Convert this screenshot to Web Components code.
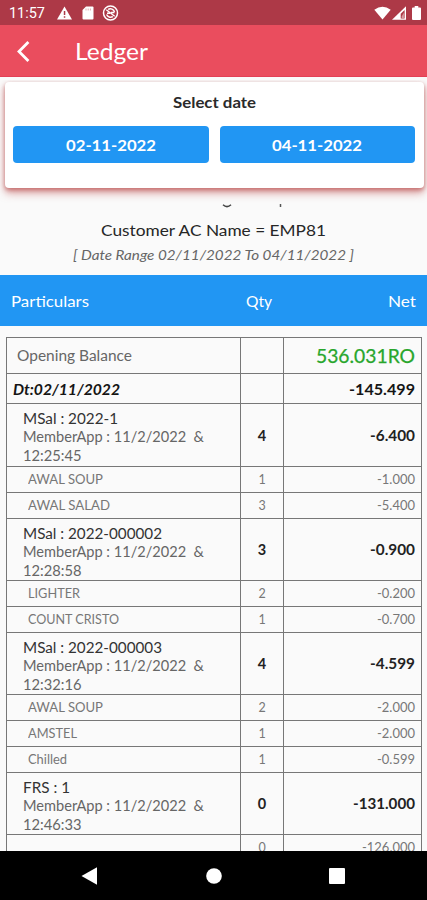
<!DOCTYPE html>
<html lang="en"><head><meta charset="utf-8"><title>Ledger</title>
<style>html,body{margin:0;height:100%;overflow:hidden;background:#fafafa}body{font-family:Lato,"Noto Sans",sans-serif}</style></head>
<body><ledger-app></ledger-app>
<script>
const define=(name,html,init)=>customElements.define(name,class extends HTMLElement{
  connectedCallback(){
    if(this.shadowRoot)return;
    const t=document.createElement('template');
    t.innerHTML=typeof html==='function'?html(this):html;
    this.attachShadow({mode:'open'}).append(t.content.cloneNode(true));
    if(init)init(this);
  }
});

// A single line of text widened to the width given in "w".
define('text-line',`<style>:host{display:inline-block;white-space:pre;flex:none;text-align:left}span{display:inline-block;transform-origin:0 50%}</style><span></span>`,el=>{
  const s=el.shadowRoot.querySelector('span');s.textContent=el.getAttribute('text');
  const w=+el.getAttribute('w');
  if(w){const k=w/s.getBoundingClientRect().width;s.style.transform=`scaleX(${k})`;el.style.width=w+'px';}
});

define('status-bar',`<style>
:host{display:flex;height:25px;background:#ad3947;color:#fff;align-items:center;box-sizing:border-box;padding:1px 6px 0 9px;font:400 14.500px/24px Roboto,sans-serif}
text-line{position:relative;top:1px}
svg{display:block;fill:#fff;flex:none}.sp{flex:1}</style>
<text-line text="11:57" w="36"></text-line>
<svg style="margin-left:12px" width="15" height="14" viewBox="0 0 15 14"><path d="M7.5 .5 15 13.5H0z"/><path d="M6.8 5h1.5v4H6.8zM6.8 10.3h1.5v1.5H6.8z" fill="#ad3947"/></svg>
<svg style="margin-left:10px" width="12" height="14" viewBox="0 0 12 14"><path d="M4 .5h6.5q1 0 1 1v11q0 1-1 1h-9q-1 0-1-1V4z"/><path d="M4 2.5v2M6.2 2.5v2M8.4 2.5v2" stroke="#d99ca3" stroke-width=".8"/></svg>
<svg style="margin-left:8px" width="17" height="16" viewBox="0 0 17 16"><g fill="none" stroke="#fff"><circle cx="8.5" cy="8" r="7" stroke-width="1.5"/><path d="M4.600 9.500A4.200 4.200 0 0 0 10.800 11.500M12.500 7A4.200 4.200 0 0 0 6.200 4.500" stroke-width="1.500"/><path d="M4.300 4.800 12.700 11.200M5 8.300h3M9 7.500h3.500" stroke-width="1.400"/></g></svg>
<span class="sp"></span>
<svg width="17" height="14" viewBox="0 0 17 14"><path d="M.3 3.8Q8.5-2.4 16.7 3.8L8.5 13.6z"/></svg>
<svg style="margin-left:1px" width="14" height="14" viewBox="0 0 14 14"><path d="M0 13.8 14 .3v13.5z"/><path d="M8.7 7.7 12.6 4v8.4H8.7z" fill="#ad3947"/><path d="m9.7 10.5 2.2-4v5.8H9.7z" fill="#d99ca3"/></svg>
<svg style="margin-left:6px" width="9" height="14" viewBox="0 0 9 14"><path d="M2.7 0h3.6v1.5H8q1 0 1 1V13q0 1-1 1H1q-1 0-1-1V2.500q0-1 1-1h1.700z"/></svg>`);

define('app-bar',`<style>:host{display:flex;height:52px;background:#ea4d5e;border-bottom:1px solid #e24056;box-sizing:border-box;align-items:center;padding-left:16px;color:#fff;font-size:24px;line-height:50px}
svg{margin-right:44px}</style>
<svg width="15" height="24" viewBox="0 0 15 24"><path d="M12.400 3 3 12.500 12.400 22" fill="none" stroke="#fff" stroke-width="2.800"/></svg><text-line text="Ledger" w="73"></text-line>`);

define('date-button',el=>`<style>:host{display:flex;flex:1;height:37px;background:#2196f3;border-radius:4px;align-items:center;justify-content:center;color:#fff;font-weight:700;font-size:15.500px}</style><text-line text="${el.getAttribute('value')}" w="90"></text-line>`);

define('date-card',`<style>:host{display:block;margin:5px 3px 0 5px;height:106px;background:#fff;border-radius:4px;box-sizing:border-box;padding:10px 9px 0 8px;box-shadow:0 5px 9px rgba(190,70,70,.5),0 2px 4px rgba(170,60,60,.55);clip-path:inset(-2px -8px -18px -8px)}
h2{margin:0;font-size:15.500px;font-weight:700;color:#2a2a2a;text-align:center;line-height:20px}
.row{display:flex;gap:11px;margin-top:14px}</style>
<h2><text-line text="Select date" w="83"></text-line></h2><div class="row"><date-button value="02-11-2022"></date-button><date-button value="04-11-2022"></date-button></div>`);

define('report-title',`<style>:host{display:flex;flex-direction:column;align-items:center;height:87px}
svg{display:block;flex:none;margin-top:16px}.n{font-size:16px;line-height:20px;margin-top:11px;color:#262626}.d{font-size:14px;line-height:20px;font-style:italic;color:#666;margin-top:5px}</style>
<svg width="427" height="5" viewBox="0 0 427 5"><path d="M223 .8Q227 4.500 231 .8" fill="none" stroke="#444" stroke-width="1.500"/><path d="M280.500 0v3" stroke="#555" stroke-width="1.500"/></svg>
<text-line class="n" text="Customer AC Name = EMP81" w="225"></text-line><text-line class="d" text="[ Date Range 02/11/2022 To 04/11/2022 ]" w="281"></text-line>`);

define('column-head',`<style>:host{display:grid;grid-template-columns:1fr 58px 128px;height:51px;padding:0 11px 0 11px;box-sizing:border-box;background:#2196f3;color:#fff;font-size:16px;align-items:center;line-height:51px}.q{justify-self:center}.r{justify-self:end}</style>
<text-line text="Particulars" w="78"></text-line><text-line class="q" text="Qty" w="26"></text-line><text-line class="r" text="Net" w="28"></text-line>`);

define('ledger-row',`<style>
:host{display:grid;grid-template-columns:233px 42px 1fr;column-gap:1px;background:#777;border-bottom:1px solid #777;box-sizing:border-box}
div{background:#fafafa;display:flex;align-items:center;min-width:0}
.q{justify-content:center}.r{justify-content:flex-end;padding-right:6px}
:host([kind=open]){height:36px;font-size:14.500px;color:#666}:host([kind=open]) .p{padding-left:10px}:host([kind=open]) .r{font-size:18.500px;color:#28a62c;-webkit-text-stroke:.25px #28a62c}
:host([kind=day]){height:30px;font-size:15px;font-weight:700;color:#151515}:host([kind=day]) .p{font-style:italic;padding-left:6px}
:host([kind=entry]){height:62px;grid-template-rows:100%;font-size:14.500px;font-weight:700;color:#222}:host([kind=entry]) .p{box-sizing:border-box;flex-direction:column;align-items:flex-start;padding:6px 0 0 16px;justify-content:flex-start;font-weight:400;line-height:18.300px;color:#666}
:host([kind=item]){height:26px;font-size:12.500px;color:#777}:host([kind=item]) .p{padding-left:21px}
</style><div class="p"><slot></slot></div><div class="q"><slot name="qty"></slot></div><div class="r"><slot name="net"></slot></div>`);

const E=(a,aw,t,q,n,nw=45)=>['entry',[[a,aw],['MemberApp : 11/2/2022  &amp;',181],[t,58.5]],q,n,nw];
const I=(a,w,q,n,nw=38)=>['item',[[a,w]],q,n,nw];
const rows=[
 ['open',[['Opening Balance',115]],'','536.031RO',99],
 ['day',[['Dt:02/11/2022',107]],'','-145.499',66],
 E('MSal : 2022-1',95,'12:25:45','4','-6.400'),
 I('AWAL SOUP',75,'1','-1.000'),I('AWAL SALAD',82,'3','-5.400'),
 E('MSal : 2022-000002',139,'12:28:58','3','-0.900'),
 I('LIGHTER',52,'2','-0.200'),I('COUNT CRISTO',91,'1','-0.700'),
 E('MSal : 2022-000003',139,'12:32:16','4','-4.599'),
 I('AWAL SOUP',75,'2','-2.000'),I('AMSTEL',49,'1','-2.000'),I('Chilled',39,'1','-0.599'),
 E('FRS : 1',47,'12:46:33','0','-131.000',62),
 I('',0,'0','-126.000',53)
];
define('ledger-table',`<style>:host{display:block;margin:11px 5px 0 6px;border:1px solid #777;border-bottom:0}</style>`+
 rows.map(([k,p,q,n,nw],i)=>`<ledger-row kind="${k}"${i===2?' style="height:63px"':''}>${p.filter(x=>x[0]).map(([t,w],j)=>`<text-line text="${t}" w="${w}"${k==='entry'&&j===0?' style="color:#333"':''}></text-line>`).join('')}${q?`<text-line slot="qty" text="${q}"></text-line>`:''}<text-line slot="net" text="${n}" w="${nw}"></text-line></ledger-row>`).join(''));

define('nav-bar',`<style>:host{display:flex;height:49px;background:#000;align-items:center;padding:0 82px 0 81px;justify-content:space-between;box-sizing:border-box}svg{fill:#fff;display:block}</style>
<svg width="17" height="18" viewBox="0 0 17 18"><path d="M.5 9 16 .3v17.400z"/></svg><svg width="16" height="16" viewBox="0 0 16 16"><circle cx="8" cy="8" r="7.800"/></svg><svg width="16" height="16" viewBox="0 0 16 16"><rect width="16" height="16" rx="1"/></svg>`);

define('ledger-app',`<style>:host{display:flex;flex-direction:column;width:427px;height:900px;overflow:hidden;background:#fafafa}main{flex:1;min-height:0;overflow:hidden}</style>
<status-bar></status-bar><app-bar></app-bar><main><date-card></date-card><report-title></report-title><column-head></column-head><ledger-table></ledger-table></main><nav-bar></nav-bar>`);
</script></body></html>
